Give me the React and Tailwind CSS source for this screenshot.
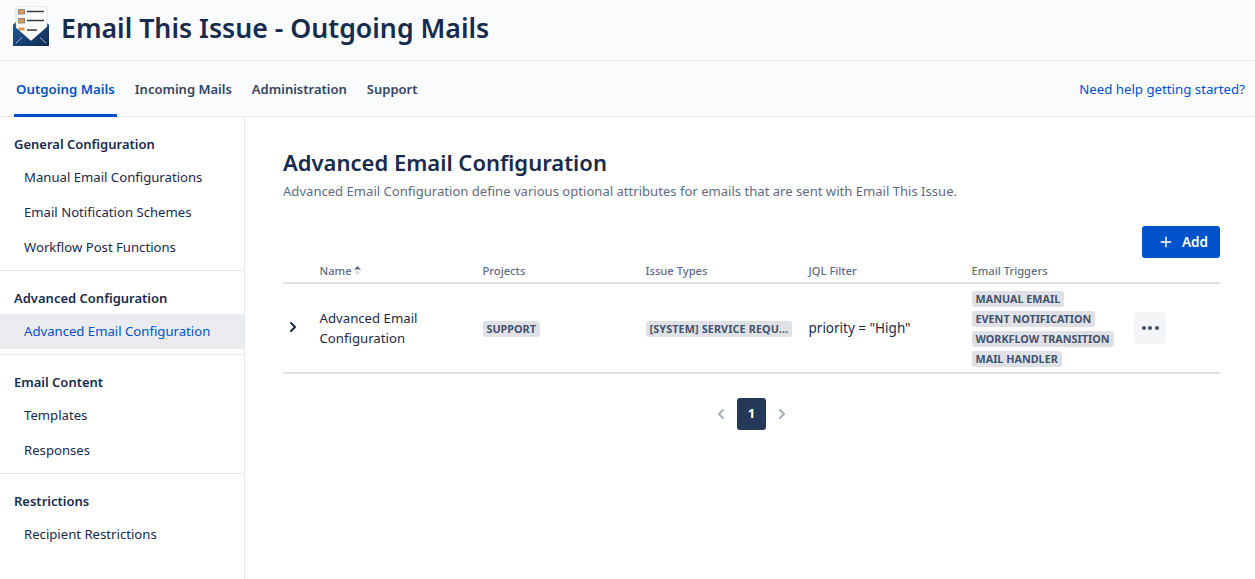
import React from "react";
import { ChevronLeft, ChevronRight, Plus } from "lucide-react";

const font = "font-['Noto_Sans','Open_Sans',sans-serif]";

function Logo() {
  return (
    <svg width="38" height="40" viewBox="0 0 38 40" className="shrink-0">
      <defs>
        <linearGradient id="env" x1="0" y1="0" x2="1" y2="1">
          <stop offset="0" stopColor="#1f5a9c" />
          <stop offset="1" stopColor="#10294f" />
        </linearGradient>
      </defs>
      <path d="M1 19 L5 15 H33 L37 19 V38 H1 Z" fill="#17427a" />
      <path d="M4 0 H35 V23 L19 35 L4 23 Z" fill="#fbfbfb" stroke="#c9ccd1" strokeWidth="0.6" />
      <rect x="6.5" y="3.5" width="6" height="4.5" fill="#e8963f" stroke="#8a8a8a" strokeWidth="1" />
      <rect x="6.5" y="12.5" width="6" height="4.5" fill="#e8963f" stroke="#8a8a8a" strokeWidth="1" />
      <rect x="6.5" y="21.5" width="6" height="3" fill="#e8963f" />
      <path d="M15 5.5 H32 M15 14.5 H32 M15 24 H25" stroke="#3a3a3a" strokeWidth="1.5" />
      <path d="M1 19 L19 35 L37 19 V40 H1 Z" fill="url(#env)" />
      <path d="M4 37 L10 31.5 M34 37 L28 31.5" stroke="#b8c8dc" strokeWidth="0.9" />
    </svg>
  );
}

function Tag({ children, className = "" }) {
  return (
    <span className={`inline-block h-4 rounded-[3px] bg-[#dfe1e6] px-1 text-[10.8px] leading-4 font-bold whitespace-nowrap text-[#42526e] ${className}`}>
      {children}
    </span>
  );
}

function SideGroup({ title, items, active, last }) {
  return (
    <div className={`pt-[12px] pb-[5px] ${last ? "" : "border-b border-[#e6e8ec]"}`}>
      <div className="flex h-[31px] items-center px-[14px] text-[13px] font-semibold text-[#172b4d]">{title}</div>
      {items.map((item) => (
        <div
          key={item}
          className={`flex h-[35px] items-center pl-6 text-[13.15px] ${
            item === active ? "bg-[#ebecf0] text-[#0052cc]" : "text-[#172b4d]"
          }`}
        >
          {item}
        </div>
      ))}
    </div>
  );
}

export default function App() {
  return (
    <div className={`${font} flex h-[579px] flex-col overflow-hidden bg-white text-[#172b4d]`}>
      {/* Title bar */}
      <header className="flex h-[61px] items-start gap-[11px] border-b border-[#ebecf0] bg-[#fafbfc] pt-[6px] pl-[12px]">
        <Logo />
        <h1 className="text-[26.7px] leading-[44px] font-semibold text-[#172b4d]">Email This Issue - Outgoing Mails</h1>
      </header>

      {/* Tabs */}
      <nav className="flex h-[56px] items-stretch justify-between border-b border-[#ebecf0] bg-[#fafbfc] pr-[10px] pl-[14px]">
        <div className="flex gap-[16px] text-[13px] font-semibold">
          <div className="-mb-px flex items-center border-b-[3px] border-[#0052cc] px-[2px] pt-[5px] text-[13.25px] text-[#0052cc]">Outgoing Mails</div>
          <div className="flex items-center px-[2px] pt-[2px] text-[#344563]">Incoming Mails</div>
          <div className="flex items-center px-[2px] pt-[2px] text-[#344563]">Administration</div>
          <div className="flex items-center px-[2px] pt-[2px] text-[#344563]">Support</div>
        </div>
        <a className="flex items-center pt-[2px] text-[13.25px] text-[#0052cc]">Need help getting started?</a>
      </nav>

      <div className="flex min-h-0 flex-1">
        {/* Sidebar */}
        <aside className="w-[245px] shrink-0 border-r border-[#e6e8ec] bg-white">
          <SideGroup
            title="General Configuration"
            items={["Manual Email Configurations", "Email Notification Schemes", "Workflow Post Functions"]}
          />
          <SideGroup title="Advanced Configuration" items={["Advanced Email Configuration"]} active="Advanced Email Configuration" />
          <SideGroup title="Email Content" items={["Templates", "Responses"]} />
          <SideGroup title="Restrictions" items={["Recipient Restrictions"]} last />
        </aside>

        {/* Main */}
        <main className="flex-1 pt-[30px] pr-[35px] pl-[38px]">
          <h2 className="text-[22px] leading-[30px] font-semibold text-[#172b4d]">Advanced Email Configuration</h2>
          <p className="mt-[4px] text-[13.08px] leading-5 text-[#5e6c84]">
            Advanced Email Configuration define various optional attributes for emails that are sent with Email This Issue.
          </p>

          <div className="mt-[25px] flex justify-end">
            <button className="flex h-8 w-[78px] items-center justify-center gap-[8px] rounded-[3px] bg-[#0052cc] pl-[4px] text-[13.6px] font-semibold text-white">
              <Plus size={16} strokeWidth={2.25} />
              <span className="pt-[1px]">Add</span>
            </button>
          </div>

          {/* Table */}
          <div className="mt-[5px] grid h-[21px] grid-cols-[36.5px_163px_163px_163px_163px_1fr] border-b-2 border-[#dfe1e6] text-[11.2px] leading-4 font-medium text-[#5e6c84]">
            <div />
            <div className="flex items-start gap-[2px]">
              Name
              <svg width="7" height="9" viewBox="0 0 7 9" className="mt-[3px]">
                <path d="M3.5 0 L7 3.5 H0 Z" fill="#5e6c84" />
                <path d="M3.5 9 L7 5.5 H0 Z" fill="#dfe1e6" />
              </svg>
            </div>
            <div>Projects</div>
            <div>Issue Types</div>
            <div>JQL Filter</div>
            <div>Email Triggers</div>
          </div>
          <div className="grid h-[90px] grid-cols-[36.5px_163px_163px_163px_163px_1fr] items-center border-b-2 border-[#dfe1e6] text-[13.2px]">
            <div className="pl-[2px]">
              <ChevronRight size={16} strokeWidth={3} className="-mt-[3px] text-[#172b4d]" />
            </div>
            <div className="leading-5">
              Advanced Email
              <br />
              Configuration
            </div>
            <div className="pt-[2px]"><Tag>SUPPORT</Tag></div>
            <div className="pt-[2px]"><Tag className="tracking-[0.12px]">[SYSTEM] SERVICE REQU...</Tag></div>
            <div className="text-[13.5px]">priority = "High"</div>
            <div className="flex items-center pt-[2px]">
              <div className="flex w-[163px] flex-col items-start gap-1">
                <Tag>MANUAL EMAIL</Tag>
                <Tag>EVENT NOTIFICATION</Tag>
                <Tag>WORKFLOW TRANSITION</Tag>
                <Tag>MAIL HANDLER</Tag>
              </div>
            </div>
          </div>
          <div className="relative">
            <button className="absolute -top-[62px] right-[54px] flex h-8 w-8 items-center justify-center gap-[2.5px] rounded-[3px] bg-[#f4f5f7]">
              <span className="h-[4px] w-[4px] rounded-full bg-[#42526e]" />
              <span className="h-[4px] w-[4px] rounded-full bg-[#42526e]" />
              <span className="h-[4px] w-[4px] rounded-full bg-[#42526e]" />
            </button>
          </div>

          {/* Pagination */}
          <div className="mt-[24px] flex items-center justify-center gap-[7px]">
            <ChevronLeft size={16} strokeWidth={3} className="text-[#a5adba]" />
            <div className="mx-[1px] flex h-8 w-[29px] items-center justify-center rounded-[3px] bg-[#253858] text-[13px] font-bold text-white">1</div>
            <ChevronRight size={16} strokeWidth={3} className="text-[#a5adba]" />
          </div>
        </main>
      </div>
    </div>
  );
}
